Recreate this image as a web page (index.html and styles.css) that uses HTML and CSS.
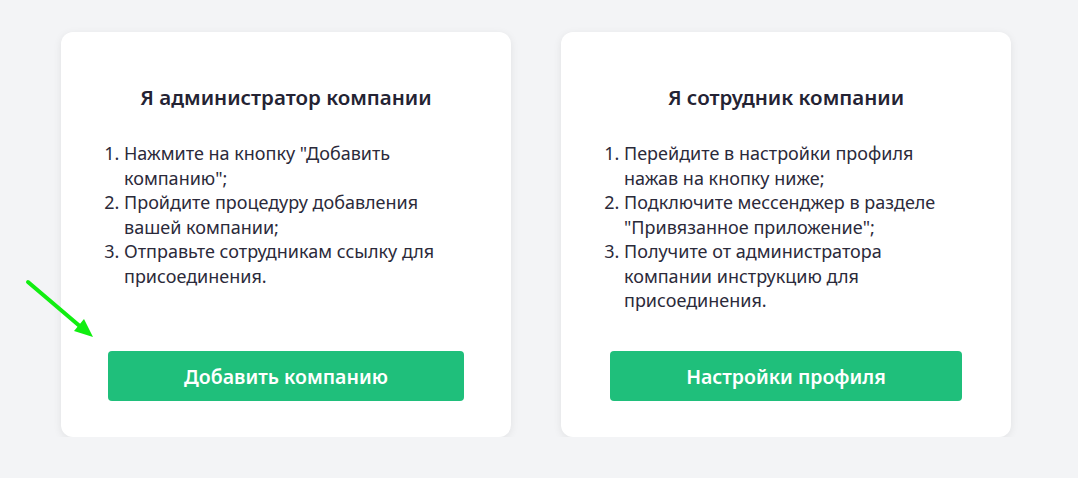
FILE: index.html
```html
<!DOCTYPE html>
<html lang="ru">
<head>
  <meta charset="UTF-8">
  <meta name="viewport" content="width=device-width, initial-scale=1.0">
  <title>Выбор роли</title>
  <link rel="stylesheet" href="styles.css">
</head>
<body>
  <div class="roles">
    <div class="role-card">
      <h2>Я администратор компании</h2>
      <ol>
        <li>Нажмите на кнопку "Добавить компанию";</li>
        <li>Пройдите процедуру добавления вашей компании;</li>
        <li>Отправьте сотрудникам ссылку для присоединения.</li>
      </ol>
      <div class="role-action">
        <button>Добавить компанию</button>
      </div>
    </div>

    <div class="role-card">
      <h2>Я сотрудник компании</h2>
      <ol>
        <li>Перейдите в настройки профиля нажав на кнопку ниже;</li>
        <li>Подключите мессенджер в разделе "Привязанное приложение";</li>
        <li>Получите от администратора компании инструкцию для присоединения.</li>
      </ol>
      <div class="role-action">
        <button>Настройки профиля</button>
      </div>
    </div>
  </div>

  <!-- annotation arrow -->
  <svg class="hint-arrow" width="90" height="80" viewBox="20 270 90 80">
    <line x1="28" y1="282" x2="82" y2="328" stroke="#11ee11" stroke-width="4" stroke-linecap="round"/>
    <polygon points="93,337 74,331 84,319" fill="#11ee11"/>
  </svg>
</body>
</html>
```

FILE: styles.css
```css
body {
  margin: 0;
  font-family: "Noto Sans", "Open Sans", sans-serif;
  background-color: #f3f4f6;
  color: #2b2a3a;
}
.roles {
  display: flex;
  gap: 50px;
  padding: 32px 0 0 61px;
}
.role-card {
  display: flex;
  flex-direction: column;
  width: 450px;
  height: 405px;
  box-sizing: border-box;
  padding: 0 44px 36px;
  background-color: #ffffff;
  border-radius: 12px;
  box-shadow: 0 2px 8px rgba(0,0,0,0.08);
}
.role-card h2 {
  margin: 51px 0 0;
  font-size: 20.5px;
  line-height: 28px;
  font-weight: 600;
  text-align: center;
  color: #242333;
}
.role-card ol {
  margin: 30px 0 0;
  padding-left: 19px;
  font-size: 18px;
  line-height: 24.5px;
}
.role-action {
  margin-top: auto;
  text-align: center;
}
.role-action button {
  font-family: inherit;
  font-size: 19.5px;
  font-weight: 600;
  height: 50px;
  padding: 0 76px;
  border: none;
  border-radius: 4px;
  background-color: #1fbf7b;
  color: #ffffff;
  cursor: pointer;
}
.hint-arrow {
  position: absolute;
  left: 20px;
  top: 270px;
}
```
